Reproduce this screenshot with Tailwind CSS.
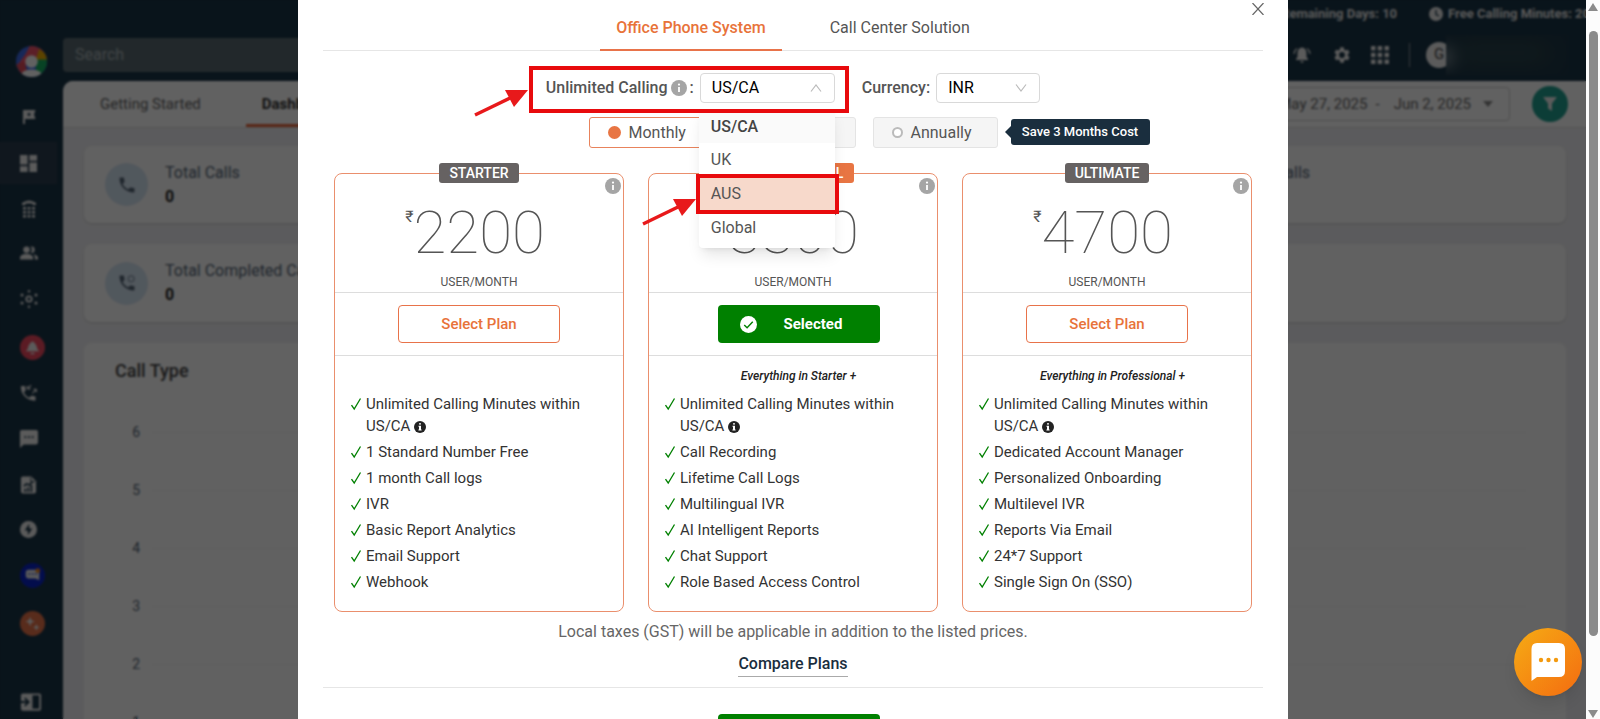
<!DOCTYPE html>
<html lang="en">

<head>
    <meta charset="UTF-8">
    <meta name="viewport" content="width=device-width, initial-scale=1.0">
    <title>Dashboard - Choose a Plan</title>
    <script src="https://cdn.jsdelivr.net/npm/@tailwindcss/browser@4"></script>
</head>

<body class="bg-[#1a3547] font-[Roboto,sans-serif] text-base">

    <!-- Shared icons -->
    <svg class="hidden">
        <symbol id="check" viewBox="0 0 12 14"><path d="M1.500 8.200 4.200 12 10.500 1.500" fill="none" stroke="#008000" stroke-width="1.300" /></symbol>
        <symbol id="info" viewBox="0 0 16 16"><circle cx="8" cy="8" r="8" fill="currentColor" /><circle cx="8" cy="4.600" r="1.100" fill="#fff" /><path d="M7.100 6.900h1.800v5H7.100z" fill="#fff" /></symbol>
        <symbol id="info-serif" viewBox="0 0 12 12"><circle cx="6" cy="6" r="6" fill="#222" /><path d="M5 2.200h2v1.400H5zM4.500 4.700H7v3.800h.6v1H4.400v-1H5V5.700h-.5z" fill="#fff" /></symbol>
        <symbol id="phone" viewBox="0 0 24 24"><path d="M20 15.500c-1.250 0-2.450-.2-3.570-.57a1.020 1.020 0 0 0-1.020.24l-2.200 2.200a15.050 15.050 0 0 1-6.590-6.590l2.200-2.200c.28-.28.36-.67.25-1.020A11.400 11.400 0 0 1 8.500 4c0-.55-.45-1-1-1H4c-.55 0-1 .45-1 1 0 9.390 7.610 17 17 17 .55 0 1-.45 1-1v-3.500c0-.55-.45-1-1-1z" fill="currentColor" /></symbol>
        <symbol id="arrow" viewBox="0 0 54 28"><path d="M1 26 36 9" stroke="#e8191b" stroke-width="3.500" /><path d="M31 1h23L40 18z" fill="#e8191b" /></symbol>
    </svg>

    <div class="relative flex h-screen overflow-hidden">

        <div class="relative flex min-w-0 flex-1 overflow-hidden">

            <!-- Sidebar -->
            <nav class="flex w-[63px] shrink-0 flex-col text-[#eee]">
                <a href="#" aria-label="Home" class="mt-[46px] ml-4 block size-[31px]">
                    <svg viewBox="0 0 32 32" class="size-full">
                        <clipPath id="logo-clip"><circle cx="16" cy="16" r="16" /></clipPath>
                        <g clip-path="url(#logo-clip)">
                            <path d="M0 0h32v32H0z" fill="#3d6be8" />
                            <path d="M14 0h10l6 6-8 9L8 20 0 22 10 8z" fill="#f0526a" />
                            <path d="M24 3l8 6v7H20z" fill="#f0b000" />
                            <path d="M21 14h11v18H20z" fill="#16b060" />
                            <path d="M0 19l9-3 3 12-6 4z" fill="#e04a5a" />
                            <circle cx="16" cy="16" r="6.500" fill="#fff" />
                            <path d="M6 28c3-5 17-5 20 0v4H6z" fill="#fff" />
                        </g>
                    </svg>
                </a>
                <a href="#" aria-label="Onboarding" class="mt-[17px] flex h-[46px] items-center pl-5">
                    <svg viewBox="0 0 18 18" class="size-[18px]" fill="currentColor"><path fill-rule="evenodd" d="M3 2h12.500l-1.500 4.500 1.500 4.500H5v5H3zm6 2.300-.6 1.300-1.400.2 1 1-.2 1.400L9 7.500l1.300.7-.3-1.400 1-1-1.400-.2z" /></svg>
                </a>
                <a href="#" aria-label="Dashboard" class="my-[2px] flex h-[42px] w-[57px] items-center bg-[#2c3e50] pl-5">
                    <svg viewBox="3 3 18 18" class="size-[17px]" fill="currentColor"><path d="M3 13h8V3H3v10zm0 8h8v-6H3v6zm10 0h8V11h-8v10zm0-18v6h8V3h-8z" /></svg>
                </a>
                <a href="#" aria-label="Dialer" class="flex h-[46px] items-center pl-5">
                    <svg viewBox="0 0 18 20" class="h-5 w-[18px]" fill="currentColor">
                        <path d="M2 6V4q7-5 14 0v2h-3.500V4.500h-7V6z" />
                        <path d="M3 8h3v2.500H3zm4.500 0h3v2.500h-3zM12 8h3v2.500h-3zM3 12h3v2.500H3zm4.500 0h3v2.500h-3zm4.500 0h3v2.500h-3zM3 16h3v2.500H3zm4.500 0h3v2.500h-3zm4.500 0h3v2.500h-3z" />
                    </svg>
                </a>
                <a href="#" aria-label="Contacts" class="flex h-[42px] items-center pl-5">
                    <svg viewBox="1 2 22 20" class="h-[18px] w-[18px]" fill="currentColor"><path d="M9 12a4 4 0 1 0 0-8 4 4 0 0 0 0 8zm0 1c-3 0-8 1.500-8 4.500V20h16v-2.500c0-3-5-4.500-8-4.500zm6-1a4 4 0 0 0 0-8l-1 .2a6 6 0 0 1 0 7.600zm2 1.400c1.300 1 2.200 2.300 2.200 4.100V20H23v-2.500c0-2.200-3-3.600-6-4.100z" /></svg>
                </a>
                <a href="#" aria-label="Integrations" class="flex h-[50px] items-center pl-5">
                    <svg viewBox="0 0 18 18" class="size-[18px]" fill="currentColor">
                        <circle cx="9" cy="9" r="2.700" fill="none" stroke="currentColor" stroke-width="1.800" />
                        <circle cx="9" cy="1.300" r="1.200" /><circle cx="9" cy="16.700" r="1.200" /><circle cx="2" cy="5" r="1.500" /><circle cx="16" cy="5" r="1.500" /><circle cx="2" cy="13" r="1.500" /><circle cx="16" cy="13" r="1.500" />
                    </svg>
                </a>
                <a href="#" aria-label="Alerts" class="flex h-[46px] items-center pl-5">
                    <svg viewBox="0 0 26 26" class="size-[25px]"><circle cx="13" cy="13" r="13" fill="#f0485f" /><path d="M6 17h14l-2-2.500c-.5-3.500-2-6-5-8-3 2-4.500 4.500-5 8zM11 18.500h4v1.500h-4z" fill="#eee" /></svg>
                </a>
                <a href="#" aria-label="Call logs" class="flex h-[46px] items-center pl-5">
                    <svg viewBox="2 1 22 21" class="size-[18px]"><use href="#phone" width="24" height="24" /><path d="M11 6.500h4M11 6.500V3M11 6.500 15.500 2M17 12l5-5M22 7h-3.500M22 7v3.500" fill="none" stroke="currentColor" stroke-width="1.500" /></svg>
                </a>
                <a href="#" aria-label="Messages" class="flex h-[46px] items-center pl-5">
                    <svg viewBox="2 2 20 20" class="size-[18px]" fill="currentColor"><path fill-rule="evenodd" d="M4 2h16a2 2 0 0 1 2 2v12a2 2 0 0 1-2 2H6l-4 4V4c0-1.100.9-2 2-2zm3 7v2h2V9zm4 0v2h2V9zm4 0v2h2V9z" /></svg>
                </a>
                <a href="#" aria-label="Reports" class="flex h-[46px] items-center pl-5">
                    <svg viewBox="0 0 18 20" class="h-5 w-[17px]"><path d="M3 1h9l5 5v11a2 2 0 0 1-2 2H3a2 2 0 0 1-2-2V3c0-1 1-2 2-2z" fill="currentColor" /><path d="M5.500 17.500V14M8.700 17.500v-5M12 17.500V10M4 11l3-2 3 1 3-3.500" stroke="#1a3547" stroke-width="1.800" fill="none" /><path d="M11.500 2v4.500H16" fill="none" stroke="#1a3547" /></svg>
                </a>
                <a href="#" aria-label="Power dialer" class="flex h-[42px] items-center pl-5">
                    <svg viewBox="0 0 18 18" class="size-[17px]"><circle cx="9" cy="9" r="9" fill="currentColor" /><path d="M9.700 3 5 10h3.300v5L13 8H9.700z" fill="#1a3547" /></svg>
                </a>
                <a href="#" aria-label="Chat bot" class="flex h-[50px] items-center pl-5">
                    <svg viewBox="0 0 26 26" class="size-[25px]"><circle cx="13" cy="13" r="13" fill="#0a24c8" /><path d="M9 7h8q3 0 3 3v8l-4-2H9q-3 0-3-3v-3q0-3 3-3z" fill="#eee" /><path d="M9 11.500h1.500m2 0h1.500m2 0h1.500" stroke="#0a24c8" stroke-width="1.500" /><circle cx="18.500" cy="8" r="2.500" fill="#f08a20" /></svg>
                </a>
                <a href="#" aria-label="AI tools" class="flex h-[46px] items-center pl-5">
                    <svg viewBox="0 0 26 26" class="size-[25px]"><circle cx="13" cy="13" r="13" fill="#e8734a" /><path d="M10.500 6l1.300 3.700 3.700 1.300-3.700 1.300-1.300 3.700-1.300-3.700L5.500 11l3.700-1.300zM17 13.500l1 2.500 2.500 1-2.500 1-1 2.500-1-2.500-2.500-1 2.500-1z" fill="#eee" /></svg>
                </a>
                <a href="#" aria-label="Expand menu" class="mt-auto flex h-[34px] items-center pl-5">
                    <svg viewBox="0 0 24 20" class="h-5 w-[23px]"><rect x="1" y="1" width="21" height="18" rx="2" fill="currentColor" /><path d="M13 3h7v14h-7z" fill="#1a3547" /><path d="M0 10h8M5 6l4 4-4 4" fill="none" stroke="#1a3547" stroke-width="2" /></svg>
                </a>
            </nav>

            <div class="flex min-w-0 flex-1 flex-col">
                <!-- Account bar -->
                <div class="flex h-7 shrink-0 items-center justify-end text-[13px] font-bold whitespace-nowrap text-[#e8e8e8]">
                    <span class="mr-8">Remaining Days: 10</span>
                    <svg viewBox="0 0 14 14" class="mr-[5px] size-[14px]"><circle cx="7" cy="7" r="7" fill="#e8e8e8" /><path d="M7 3v4.500l3 1.500" fill="none" stroke="#1a3547" stroke-width="1.300" /></svg>
                    <span class="-mr-1">Free Calling Minutes: 20</span>
                </div>

                <!-- Header -->
                <header class="flex h-[53px] shrink-0 items-center justify-between text-[#eee]">
                    <input type="text" aria-label="Search" placeholder="Search" class="h-[34px] w-[420px] rounded-sm bg-[#5a6b72] px-3 text-base placeholder-[#aab4b8]">
                    <div class="flex items-center">
                        <button type="button" aria-label="Notifications">
                            <svg viewBox="0 0 18 18" class="size-[18px]" fill="currentColor"><path d="M9 1.500c-3 .4-4.500 2.500-4.500 5.500v4L3 13v1h12v-1l-1.500-2V7c0-3-1.500-5.100-4.500-5.500zM7.300 15a1.700 1.700 0 0 0 3.400 0z" /><path d="M4 2.500Q1.300 4.500 1 8M14 2.500Q16.700 4.500 17 8" fill="none" stroke="currentColor" stroke-width="1.200" /></svg>
                        </button>
                        <button type="button" aria-label="Settings" class="ml-[23px]">
                            <svg viewBox="2 2 20 20" class="size-4" fill="currentColor"><path d="M19.140 12.940c.04-.3.06-.61.06-.94 0-.32-.02-.64-.07-.94l2.030-1.580a.49.49 0 0 0 .12-.61l-1.920-3.320a.49.49 0 0 0-.59-.22l-2.390.96a7 7 0 0 0-1.620-.94l-.36-2.540a.48.48 0 0 0-.48-.41h-3.840c-.24 0-.43.17-.47.41l-.36 2.540c-.59.24-1.130.57-1.620.94l-2.390-.96a.48.48 0 0 0-.59.22L2.740 8.870c-.12.21-.08.47.12.61l2.030 1.580c-.05.3-.09.63-.09.94s.02.64.07.94l-2.030 1.580a.49.49 0 0 0-.12.61l1.920 3.320c.12.22.37.29.59.22l2.390-.96c.5.38 1.030.7 1.620.94l.36 2.540c.05.24.24.41.48.41h3.840c.24 0 .44-.17.47-.41l.36-2.540a7 7 0 0 0 1.620-.94l2.390.96c.22.08.47 0 .59-.22l1.920-3.320a.48.48 0 0 0-.12-.61zM12 15.600a3.600 3.600 0 1 1 0-7.200 3.600 3.600 0 0 1 0 7.200z" /></svg>
                        </button>
                        <button type="button" aria-label="Apps" class="ml-[21px]">
                            <svg viewBox="0 0 18 18" class="size-[18px]" fill="currentColor"><path d="M0 0h4.500v4.500H0zm6.700 0h4.500v4.500H6.700zm6.800 0H18v4.500h-4.500zM0 6.700h4.500v4.500H0zm6.700 0h4.500v4.500H6.700zm6.800 0H18v4.500h-4.500zM0 13.500h4.500V18H0zm6.700 0h4.500V18H6.700zm6.800 0H18V18h-4.500z" /></svg>
                        </button>
                        <span class="ml-5 h-6 w-px bg-[#8a979d]"></span>
                        <div class="relative ml-4 flex h-10 w-[160px] items-center">
                            <span class="flex size-[26px] items-center justify-center rounded-full bg-[#eee] text-[15px] text-[#444]">G</span>
                            <!-- Account name is kept hidden -->
                            <div class="absolute top-0 left-5 h-10 w-[122px] overflow-hidden bg-[#1c3647]">
                                <div class="absolute top-3 -left-3 h-5 w-5 rounded-full bg-white/50 blur-sm"></div>
                                <div class="absolute top-3 left-2 h-3 w-24 bg-[#3c5350] blur-md"></div>
                            </div>
                        </div>
                    </div>
                </header>

                <!-- Dashboard content -->
                <main class="flex min-h-0 flex-1 flex-col overflow-hidden rounded-tl-[10px] bg-[#f0f0f3]">
                    <div class="flex h-[47px] shrink-0 items-center justify-between border-b border-[#ddd] bg-white pr-[18px]">
                        <div class="flex h-full text-[15px]">
                            <a href="#" class="flex items-center pl-[37px] text-[#666]">Getting Started</a>
                            <a href="#" class="ml-[45px] flex items-center border-b-[3px] border-[#e8643a] px-4 pt-[3px] font-bold text-[#333]">Dashboard</a>
                        </div>
                        <div class="flex items-center text-[15px] text-[#666]">
                            <button type="button" class="flex h-[34px] items-center rounded-sm border border-[#ccc] pr-4 pl-3">
                                May 27, 2025<span class="mr-[6px] ml-2">-</span><span class="ml-2">Jun 2, 2025</span>
                                <svg viewBox="0 0 10 6" class="ml-3 h-[6px] w-[10px]"><path d="M0 0h10L5 6z" fill="#888" /></svg>
                            </button>
                            <button type="button" aria-label="Filter" class="ml-[22px] flex size-9 items-center justify-center rounded-full bg-[#20a090]">
                                <svg viewBox="0 0 14 14" class="size-[14px]"><path d="M0 0h14L9 6.500V14l-4-2.500v-5z" fill="#eee" /></svg>
                            </button>
                        </div>
                    </div>

                    <div class="flex flex-1 flex-col gap-[21px] py-[18px] pr-5 pl-[21px] text-[#567]">
                        <div class="grid shrink-0 grid-cols-3 gap-5">
                            <div class="flex h-[77px] items-center rounded-lg bg-white pl-[21px] shadow-sm">
                                <span class="flex size-[43px] items-center justify-center rounded-full bg-[#d6e6f4]"><svg class="size-5 text-[#567]"><use href="#phone" /></svg></span>
                                <p class="ml-[17px] text-base leading-6">Total Calls<br><b class="text-[#222]">0</b></p>
                            </div>
                            <div class="h-[77px] rounded-lg bg-white shadow-sm"></div>
                            <div class="flex h-[77px] items-center rounded-lg bg-white pl-[21px] shadow-sm">
                                <span class="flex size-[43px] items-center justify-center rounded-full bg-[#d6e6f4]"><svg class="size-5 text-[#567]"><use href="#phone" /></svg></span>
                                <p class="ml-[17px] text-base leading-6">Total Outgoing Calls<br><b class="text-[#222]">0</b></p>
                            </div>
                        </div>
                        <div class="grid shrink-0 grid-cols-3 gap-5">
                            <div class="flex h-[78px] items-center rounded-lg bg-white pl-[21px] shadow-sm">
                                <span class="flex size-[43px] items-center justify-center rounded-full bg-[#d6e6f4]">
                                    <svg viewBox="0 0 24 24" class="size-5 text-[#567]"><use href="#phone" /><circle cx="17" cy="7" r="3.500" fill="none" stroke="#89a" stroke-width="1.500" /></svg>
                                </span>
                                <p class="ml-[17px] text-base leading-6">Total Completed Calls<br><b class="text-[#222]">0</b></p>
                            </div>
                            <div class="h-[78px] rounded-lg bg-white shadow-sm"></div>
                            <div class="h-[78px] rounded-lg bg-white shadow-sm"></div>
                        </div>
                        <section class="h-[460px] shrink-0 rounded-lg bg-white pt-4 pr-10 pl-[31px]">
                            <h2 class="text-[18px] leading-6 font-medium text-[#444]">Call Type</h2>
                            <div class="mt-5 text-sm">
                                <div class="flex h-[58px] items-center"><span class="w-[25px] text-right">6</span><span class="ml-3 flex-1 border-t border-[#f4f4f4]"></span></div>
                                <div class="flex h-[58px] items-center"><span class="w-[25px] text-right">5</span><span class="ml-3 flex-1 border-t border-[#f4f4f4]"></span></div>
                                <div class="flex h-[58px] items-center"><span class="w-[25px] text-right">4</span><span class="ml-3 flex-1 border-t border-[#f4f4f4]"></span></div>
                                <div class="flex h-[58px] items-center"><span class="w-[25px] text-right">3</span><span class="ml-3 flex-1 border-t border-[#f4f4f4]"></span></div>
                                <div class="flex h-[58px] items-center"><span class="w-[25px] text-right">2</span><span class="ml-3 flex-1 border-t border-[#f4f4f4]"></span></div>
                                <div class="flex h-[58px] items-center"><span class="w-[25px] text-right">1</span><span class="ml-3 flex-1 border-t border-[#f4f4f4]"></span></div>
                            </div>
                        </section>
                    </div>
                </main>
            </div>

            <!-- Plan dialog -->
            <div class="absolute inset-0 bg-black/62 backdrop-blur-[1px]">
                <div role="dialog" aria-label="Choose a plan" class="relative mx-auto min-h-full w-[990px] max-w-full bg-white px-[25px] text-[#555]">
                    <button type="button" aria-label="Close" class="absolute top-[3px] right-6">
                        <svg viewBox="0 0 12 12" class="size-3"><path d="M.5 0l11 12M11.500 0L.5 12" stroke="#666" stroke-width="1.200" /></svg>
                    </button>

                    <div class="flex justify-center gap-8 border-b border-[#e6e6e6]">
                        <a href="#" class="-mb-px border-b-2 border-[#e8734a] px-4 pt-4 pb-[9px] font-medium text-[#e8733a]">Office Phone System</a>
                        <a href="#" class="px-4 pt-4">Call Center Solution</a>
                    </div>

                    <!-- Calling region and currency -->
                    <div class="mt-[22px] flex h-[30px] items-center justify-center">
                        <div class="relative flex items-center">
                            <label for="region" class="flex items-center font-medium">Unlimited Calling
                                <svg class="mx-[3px] size-4 text-[#a5a5a5]"><use href="#info" /></svg>:</label>
                            <select id="region" class="ml-[6px] h-[30px] w-[135px] appearance-none rounded-sm border border-[#d9d9d9] px-[11px] text-black">
                                <option>US/CA</option>
                                <option>UK</option>
                                <option>AUS</option>
                                <option>Global</option>
                            </select>
                            <svg viewBox="0 0 12 8" class="pointer-events-none absolute right-[13px] h-2 w-3"><path d="M1 7.500 6 1l5 6.500" fill="none" stroke="#bbb" stroke-width="1.200" /></svg>

                            <div role="listbox" aria-label="Calling region" class="absolute top-[33px] right-0 z-10 w-[136px] rounded-sm bg-white py-1 shadow-lg">
                                <button type="button" role="option" aria-selected="true" class="block h-[33px] w-full bg-[#fafafa] pl-3 text-left font-medium text-[#444]">US/CA</button>
                                <button type="button" role="option" class="block h-[34px] w-full pl-3 text-left">UK</button>
                                <button type="button" role="option" class="block h-[34px] w-full bg-[#f7d9cb] pl-3 text-left">AUS</button>
                                <button type="button" role="option" class="block h-[33px] w-full pl-3 text-left">Global</button>
                            </div>

                            <div class="absolute -top-[7px] -right-[14px] -left-[17px] z-20 h-[47px] border-4 border-[#e80a0d]"></div>
                            <svg class="absolute top-[16px] -left-[72px] h-7 w-[54px]"><use href="#arrow" /></svg>
                            <div class="absolute top-[101px] -right-[4px] z-20 h-10 w-[143px] border-4 border-[#e80a0d]"></div>
                            <svg class="absolute top-[125px] right-[139px] z-20 h-7 w-[54px]"><use href="#arrow" /></svg>
                        </div>
                        <label for="currency" class="ml-[27px] font-medium">Currency:</label>
                        <div class="relative ml-[6px] flex items-center">
                            <select id="currency" class="h-[30px] w-[104px] appearance-none rounded-sm border border-[#d9d9d9] px-[11px] text-black">
                                <option>INR</option>
                                <option>USD</option>
                            </select>
                            <svg viewBox="0 0 12 8" class="pointer-events-none absolute right-[13px] h-2 w-3"><path d="M1 .5 6 7l5-6.500" fill="none" stroke="#bbb" stroke-width="1.200" /></svg>
                        </div>
                    </div>

                    <!-- Billing period -->
                    <div class="mt-[14px] flex justify-center">
                        <div class="relative flex gap-[17px]">
                            <label class="flex h-[31px] w-[125px] items-center rounded-[3px] border border-[#e8835c] pl-[18px]">
                                <input type="radio" name="period" checked class="mr-2 size-[13px] appearance-none rounded-full bg-[#e87543]">Monthly
                            </label>
                            <label class="flex h-[31px] w-[125px] items-center rounded-[3px] border border-[#e4e4e4] bg-[#f5f5f5] pl-[18px]">
                                <input type="radio" name="period" class="mr-2 size-[11px] appearance-none rounded-full border-2 border-[#bbb] bg-white">Quarterly
                            </label>
                            <label class="flex h-[31px] w-[125px] items-center rounded-[3px] border border-[#e4e4e4] bg-[#f5f5f5] pl-[18px]">
                                <input type="radio" name="period" class="mr-2 size-[11px] appearance-none rounded-full border-2 border-[#bbb] bg-white">Annually
                            </label>
                            <div class="absolute top-[2px] left-full ml-[7px] flex items-center">
                                <svg viewBox="0 0 6 12" class="h-3 w-[6px]"><path d="M6 0v12L0 6z" fill="#1a2e3e" /></svg>
                                <span class="flex h-[26px] w-[139px] items-center justify-center rounded-[3px] bg-[#1a2e3e] text-[13px] font-medium whitespace-nowrap text-white">Save 3 Months Cost</span>
                            </div>
                        </div>
                    </div>

                    <!-- Plans -->
                    <div class="mt-[25px] grid grid-cols-3 gap-6 px-[11px]">
                        <section class="relative rounded-lg border border-[#ea8f6d] pb-[18px]">
                            <div class="absolute -top-[11px] right-0 left-0 flex justify-center"><h3 class="rounded-[3px] bg-[#666262] px-[10px] text-sm leading-5 font-medium text-white">STARTER</h3></div>
                            <svg class="absolute top-1 right-[2px] size-4 text-[#a5a5a5]"><use href="#info" /></svg>
                            <div class="border-b border-[#ddd] pt-[23px] pb-[2px] text-center">
                                <p class="flex justify-center pr-2 text-[60px] leading-[72px] font-thin"><span class="pt-3 text-[16px] leading-4 font-normal">₹</span>2200</p>
                                <p class="mt-[5px] text-xs leading-4">USER/MONTH</p>
                            </div>
                            <div class="flex justify-center border-b border-[#ddd] py-3">
                                <button type="button" class="h-[38px] w-[162px] rounded-sm border border-[#e8734a] text-[15px] font-medium text-[#e8733a]">Select Plan</button>
                            </div>
                            <p class="mt-3 h-4"></p>
                            <ul class="mt-[9px] space-y-1 px-[15px] text-[15px] leading-[22px] text-[#333]">
                                <li class="flex"><svg class="mt-1 mr-1 h-[14px] w-3 shrink-0"><use href="#check" /></svg><span>Unlimited Calling Minutes within<br>US/CA <svg class="inline size-3"><use href="#info-serif" /></svg></span></li>
                                <li class="flex"><svg class="mt-1 mr-1 h-[14px] w-3 shrink-0"><use href="#check" /></svg>1 Standard Number Free</li>
                                <li class="flex"><svg class="mt-1 mr-1 h-[14px] w-3 shrink-0"><use href="#check" /></svg>1 month Call logs</li>
                                <li class="flex"><svg class="mt-1 mr-1 h-[14px] w-3 shrink-0"><use href="#check" /></svg>IVR</li>
                                <li class="flex"><svg class="mt-1 mr-1 h-[14px] w-3 shrink-0"><use href="#check" /></svg>Basic Report Analytics</li>
                                <li class="flex"><svg class="mt-1 mr-1 h-[14px] w-3 shrink-0"><use href="#check" /></svg>Email Support</li>
                                <li class="flex"><svg class="mt-1 mr-1 h-[14px] w-3 shrink-0"><use href="#check" /></svg>Webhook</li>
                            </ul>
                        </section>

                        <section class="relative rounded-lg border border-[#ea8f6d] pb-[18px]">
                            <div class="absolute -top-[11px] right-0 left-0 flex justify-center"><h3 class="rounded-[3px] bg-[#e87543] px-[11px] text-sm leading-5 font-medium text-white">PROFESSIONAL</h3></div>
                            <svg class="absolute top-1 right-[2px] size-4 text-[#a5a5a5]"><use href="#info" /></svg>
                            <div class="border-b border-[#ddd] pt-[23px] pb-[2px] text-center">
                                <p class="flex justify-center pr-2 text-[60px] leading-[72px] font-thin"><span class="pt-3 text-[16px] leading-4 font-normal">₹</span>3300</p>
                                <p class="mt-[5px] text-xs leading-4">USER/MONTH</p>
                            </div>
                            <div class="flex justify-center border-b border-[#ddd] py-3 pl-[11px]">
                                <button type="button" class="flex h-[38px] w-[162px] items-center rounded-sm bg-[#008000] pl-[22px] text-[15px] font-bold text-white">
                                    <svg viewBox="0 0 18 18" class="mr-[27px] size-[17px]"><circle cx="9" cy="9" r="9" fill="#fff" /><path d="M4.500 9.500l3 3 6-6.500" fill="none" stroke="#008000" stroke-width="1.500" /></svg>Selected</button>
                            </div>
                            <p class="mt-3 pl-[11px] text-center text-xs leading-4 font-medium text-[#222] italic">Everything in Starter +</p>
                            <ul class="mt-[9px] space-y-1 px-[15px] text-[15px] leading-[22px] text-[#333]">
                                <li class="flex"><svg class="mt-1 mr-1 h-[14px] w-3 shrink-0"><use href="#check" /></svg><span>Unlimited Calling Minutes within<br>US/CA <svg class="inline size-3"><use href="#info-serif" /></svg></span></li>
                                <li class="flex"><svg class="mt-1 mr-1 h-[14px] w-3 shrink-0"><use href="#check" /></svg>Call Recording</li>
                                <li class="flex"><svg class="mt-1 mr-1 h-[14px] w-3 shrink-0"><use href="#check" /></svg>Lifetime Call Logs</li>
                                <li class="flex"><svg class="mt-1 mr-1 h-[14px] w-3 shrink-0"><use href="#check" /></svg>Multilingual IVR</li>
                                <li class="flex"><svg class="mt-1 mr-1 h-[14px] w-3 shrink-0"><use href="#check" /></svg>AI Intelligent Reports</li>
                                <li class="flex"><svg class="mt-1 mr-1 h-[14px] w-3 shrink-0"><use href="#check" /></svg>Chat Support</li>
                                <li class="flex"><svg class="mt-1 mr-1 h-[14px] w-3 shrink-0"><use href="#check" /></svg>Role Based Access Control</li>
                            </ul>
                        </section>

                        <section class="relative rounded-lg border border-[#ea8f6d] pb-[18px]">
                            <div class="absolute -top-[11px] right-0 left-0 flex justify-center"><h3 class="rounded-[3px] bg-[#666262] px-[10px] text-sm leading-5 font-medium text-white">ULTIMATE</h3></div>
                            <svg class="absolute top-1 right-[2px] size-4 text-[#a5a5a5]"><use href="#info" /></svg>
                            <div class="border-b border-[#ddd] pt-[23px] pb-[2px] text-center">
                                <p class="flex justify-center pr-2 text-[60px] leading-[72px] font-thin"><span class="pt-3 text-[16px] leading-4 font-normal">₹</span>4700</p>
                                <p class="mt-[5px] text-xs leading-4">USER/MONTH</p>
                            </div>
                            <div class="flex justify-center border-b border-[#ddd] py-3">
                                <button type="button" class="h-[38px] w-[162px] rounded-sm border border-[#e8734a] text-[15px] font-medium text-[#e8733a]">Select Plan</button>
                            </div>
                            <p class="mt-3 pl-[11px] text-center text-xs leading-4 font-medium text-[#222] italic">Everything in Professional +</p>
                            <ul class="mt-[9px] space-y-1 px-[15px] text-[15px] leading-[22px] text-[#333]">
                                <li class="flex"><svg class="mt-1 mr-1 h-[14px] w-3 shrink-0"><use href="#check" /></svg><span>Unlimited Calling Minutes within<br>US/CA <svg class="inline size-3"><use href="#info-serif" /></svg></span></li>
                                <li class="flex"><svg class="mt-1 mr-1 h-[14px] w-3 shrink-0"><use href="#check" /></svg>Dedicated Account Manager</li>
                                <li class="flex"><svg class="mt-1 mr-1 h-[14px] w-3 shrink-0"><use href="#check" /></svg>Personalized Onboarding</li>
                                <li class="flex"><svg class="mt-1 mr-1 h-[14px] w-3 shrink-0"><use href="#check" /></svg>Multilevel IVR</li>
                                <li class="flex"><svg class="mt-1 mr-1 h-[14px] w-3 shrink-0"><use href="#check" /></svg>Reports Via Email</li>
                                <li class="flex"><svg class="mt-1 mr-1 h-[14px] w-3 shrink-0"><use href="#check" /></svg>24*7 Support</li>
                                <li class="flex"><svg class="mt-1 mr-1 h-[14px] w-3 shrink-0"><use href="#check" /></svg>Single Sign On (SSO)</li>
                            </ul>
                        </section>
                    </div>

                    <p class="mt-2 text-center text-[#666]">Local taxes (GST) will be applicable in addition to the listed prices.</p>
                    <div class="mt-2 flex justify-center">
                        <a href="#" class="border-b border-[#aaa] font-medium text-[#1a2e3e]">Compare Plans</a>
                    </div>
                    <hr class="mt-[10px] border-[#e6e6e6]">
                    <div class="mt-[26px] flex justify-center pl-[11px]">
                        <button type="button" class="h-[38px] w-[162px] rounded-sm bg-[#008000] font-medium text-white">Buy Now</button>
                    </div>
                </div>
            </div>

            <!-- Chat launcher -->
            <button type="button" aria-label="Open chat" class="absolute right-1 bottom-[23px] flex size-[68px] items-center justify-center rounded-full bg-linear-to-br from-[#f5ab14] to-[#f36a10] shadow-lg">
                <svg viewBox="0 0 34 38" class="h-[38px] w-[34px]"><path d="M6 0h22q6 0 6 6v22q0 6-6 6H6l-5.500 4V6q0-6 5.500-6z" fill="#fff" /><circle cx="10" cy="17" r="2.200" fill="#f39a10" /><circle cx="17.500" cy="17" r="2.200" fill="#f39a10" /><circle cx="25" cy="17" r="2.200" fill="#f39a10" /></svg>
            </button>
        </div>

        <!-- Scroll track -->
        <div class="flex w-[14px] shrink-0 flex-col items-center bg-[#fcfcfc] pt-[3px] pb-[1px]">
            <svg viewBox="0 0 10 8" class="h-2 w-[10px]"><path d="M0 8 5 0l5 8z" fill="#8b8b8b" /></svg>
            <div class="mt-5 h-[605px] w-[9px] rounded-full bg-[#8b8b8b]"></div>
            <svg viewBox="0 0 10 8" class="mt-auto h-2 w-[10px]"><path d="M0 0h10L5 8z" fill="#8b8b8b" /></svg>
        </div>
    </div>
</body>

</html>
